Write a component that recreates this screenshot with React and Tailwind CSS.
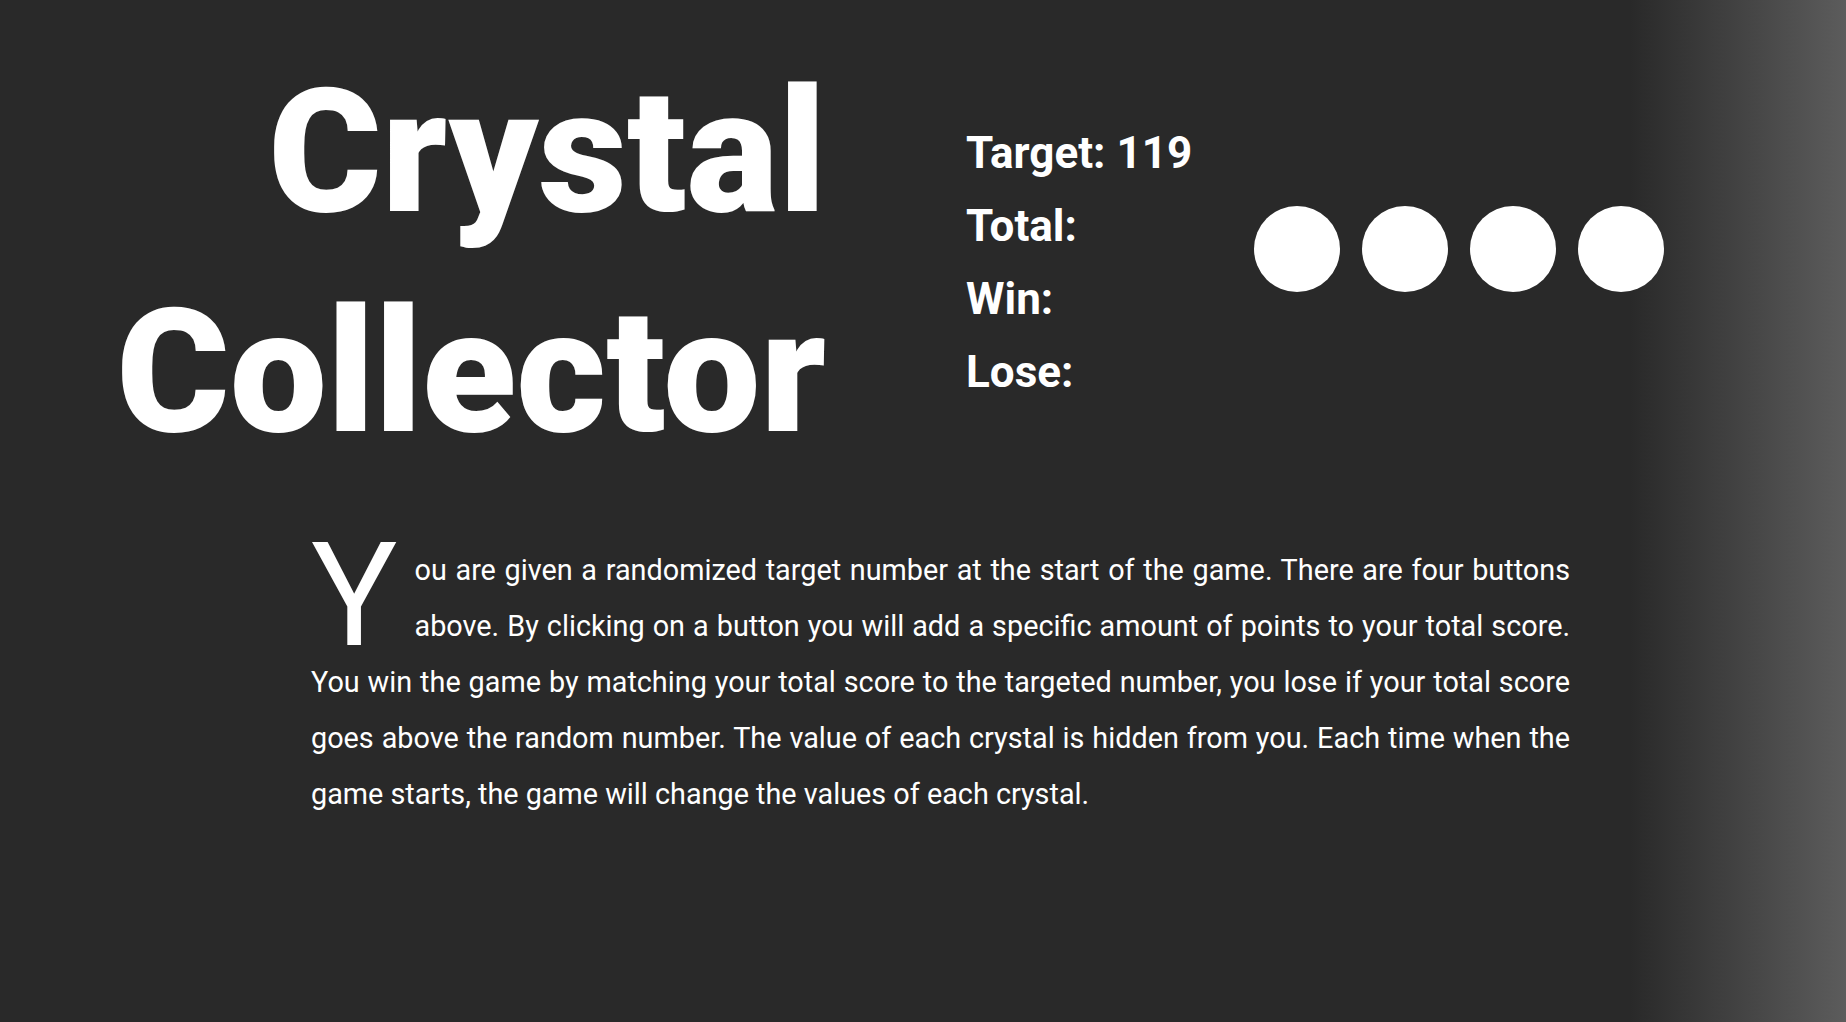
import React from "react";

export default function App() {
  const stats = ["Target: 119", "Total:", "Win:", "Lose:"];
  return (
    <div className="min-h-screen w-full bg-[linear-gradient(to_right,#292929_88.3%,#5c5c5c)] text-white font-[Roboto,sans-serif]">
      <div className="flex pt-[42px]">
        <h1 className="w-[826px] shrink-0 text-right text-[173px] leading-[220px] font-black">
          Crystal
          <br />
          Collector
        </h1>
        <div className="ml-[140px] w-[288px] shrink-0 pt-[75px]">
          {stats.map((s) => (
            <div key={s} className="text-[44px] leading-[73px] font-bold">
              {s}
            </div>
          ))}
        </div>
        <div className="mt-[164px] flex gap-[22px]">
          {[0, 1, 2, 3].map((i) => (
            <button key={i} className="h-[86px] w-[86px] rounded-full bg-white" />
          ))}
        </div>
      </div>
      <p className="mt-[60px] pl-[311px] pr-[276px] text-justify text-[28.8px] leading-[56px]">
        <span className="float-left mr-[17px] text-[144px] leading-[108px]">Y</span>
        ou are given a randomized target number at the start of the game. There are four buttons above. By clicking on a button you will add a specific amount of points to your total score. You win the game by matching your total score to the targeted number, you lose if your total score goes above the random number. The value of each crystal is hidden from you. Each time when the game starts, the game will change the values of each crystal.
      </p>
    </div>
  );
}
